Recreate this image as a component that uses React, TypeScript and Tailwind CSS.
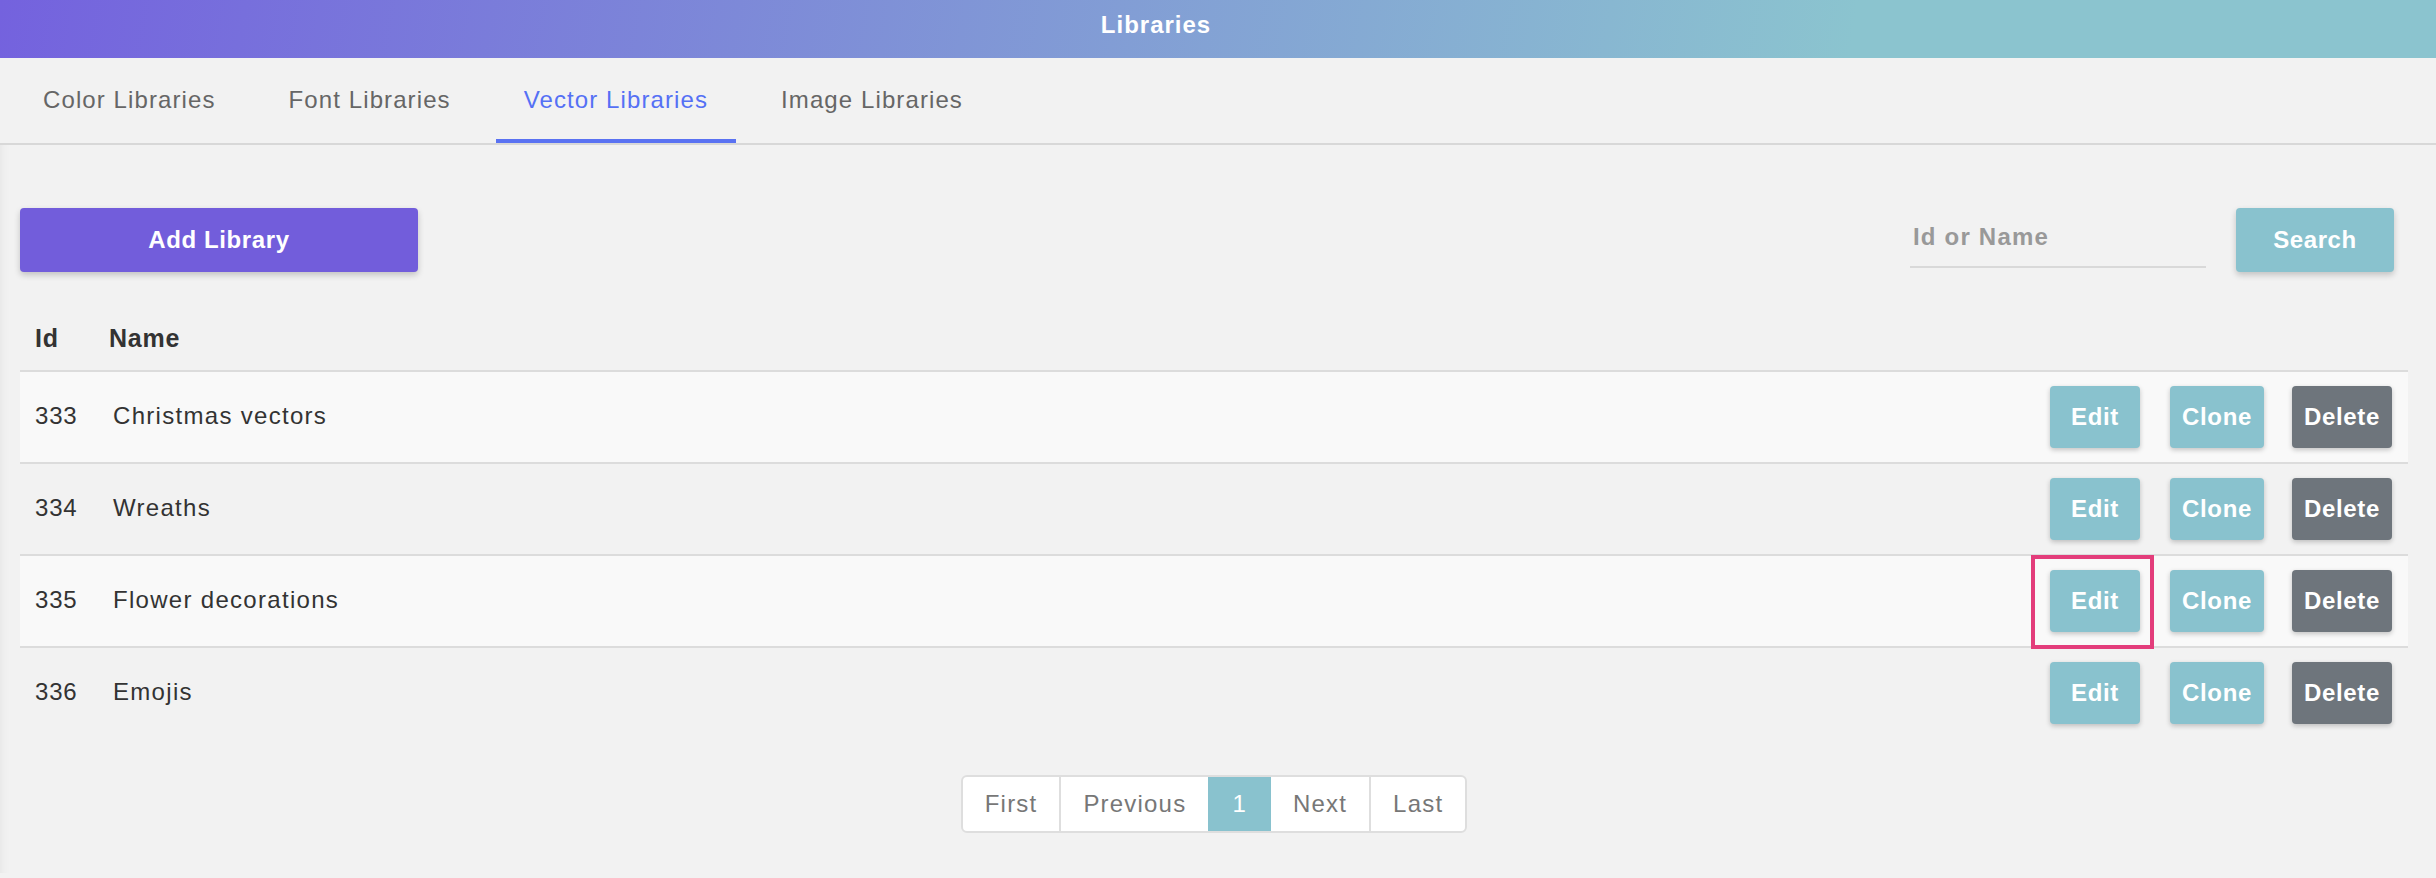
const tabs = ["Color Libraries", "Font Libraries", "Vector Libraries", "Image Libraries"];

const libraries = [
  { id: 333, name: "Christmas vectors" },
  { id: 334, name: "Wreaths" },
  { id: 335, name: "Flower decorations" },
  { id: 336, name: "Emojis" },
];

const pages = ["First", "Previous", "1", "Next", "Last"];

const btn =
  "flex h-[62px] items-center justify-center rounded-[4px] text-[24px] font-bold tracking-[0.7px] text-white shadow-[0_2px_5px_rgba(0,0,0,0.22)]";

export default function App() {
  return (
    <div className="min-h-screen bg-[#f2f2f2] font-['Liberation_Sans',Arial,sans-serif]">
      <header className="flex h-[58px] items-center justify-center bg-[linear-gradient(100deg,#7462de_0%,#8bc4cf_76%,#8bc4cf_100%)] pb-[8px] pr-[124px] text-[24px] font-bold tracking-[1px] text-white">
        Libraries
      </header>

      <nav className="flex h-[87px] gap-[17px] border-b-2 border-[#d8d8d8] pl-[15px]">
        {tabs.map((tab) => (
          <div
            key={tab}
            className={
              tab === "Vector Libraries"
                ? "flex items-center border-b-4 border-[#5a72f2] px-[28px] pt-[2px] text-[24px] tracking-[1.1px] text-[#5570f5]"
                : "flex items-center border-b-4 border-transparent px-[28px] pt-[2px] text-[24px] tracking-[1.1px] text-[#666666]"
            }
          >
            {tab}
          </div>
        ))}
      </nav>

      <main className="pl-[20px] pr-[28px] pt-[63px] shadow-[inset_12px_0_10px_-10px_rgba(0,0,0,0.05)]">
        <div className="flex items-start justify-between pr-[14px]">
          <button className="flex h-[64px] w-[398px] items-center justify-center rounded-[4px] bg-[#725ddb] text-[24px] font-bold tracking-[0.6px] text-white shadow-[0_3px_6px_rgba(0,0,0,0.2)]">
            Add Library
          </button>
          <div className="flex items-start">
            <input
              placeholder="Id or Name"
              className="mr-[30px] h-[60px] w-[296px] border-b-2 border-[#d9d9d9] bg-transparent pl-[3px] text-[24px] font-bold tracking-[1.2px] text-[#333] outline-none placeholder:text-[#999999]"
            />
            <button className="flex h-[64px] w-[158px] items-center justify-center rounded-[4px] bg-[#89c2ce] text-[24px] font-bold tracking-[0.6px] text-white shadow-[0_3px_6px_rgba(0,0,0,0.2)]">
              Search
            </button>
          </div>
        </div>

        <div className="mt-[36px] flex h-[62px] items-center text-[25px] font-bold tracking-[0.8px] text-[#333333]">
          <div className="w-[89px] pl-[15px]">Id</div>
          <div>Name</div>
        </div>

        {libraries.map((lib, i) => (
          <div
            key={lib.id}
            className={
              i % 2 === 0
                ? "flex h-[92px] items-center border-t-2 border-[#dcdcdc] bg-[#f9f9f9] pr-[16px] text-[24px] tracking-[1.3px] text-[#333333]"
                : "flex h-[92px] items-center border-t-2 border-[#dcdcdc] pr-[16px] text-[24px] tracking-[1.3px] text-[#333333]"
            }
          >
            <div className="w-[89px] pb-[3px] pl-[15px] tracking-[0.8px]">{lib.id}</div>
            <div className="flex-1 pb-[3px] pl-[4px]">{lib.name}</div>
            <div className="relative">
              <button className={`${btn} w-[90px] bg-[#89c2ce]`}>Edit</button>
              {lib.id === 335 ? (
                <span className="pointer-events-none absolute -bottom-[17px] -left-[19px] -right-[14px] -top-[15px] border-4 border-[#e33d7b]" />
              ) : null}
            </div>
            <button className={`${btn} ml-[30px] w-[94px] bg-[#89c2ce]`}>Clone</button>
            <button className={`${btn} ml-[28px] w-[100px] bg-[#6e757c]`}>Delete</button>
          </div>
        ))}

        <div className="mt-[37px] flex justify-center pb-[40px]">
          <div className="flex h-[58px] overflow-hidden rounded-[6px] border-2 border-[#dedede] bg-white">
            {pages.map((p, i) => (
              <div
                key={p}
                className={
                  p === "1"
                    ? "flex items-center bg-[#89c2ce] px-6 text-[24px] tracking-[1.2px] text-white"
                    : i > 0 && pages[i - 1] !== "1"
                      ? "flex items-center border-l-2 border-[#dedede] px-[22px] text-[24px] tracking-[1.2px] text-[#777777]"
                      : "flex items-center px-[22px] text-[24px] tracking-[1.2px] text-[#777777]"
                }
              >
                {p}
              </div>
            ))}
          </div>
        </div>
      </main>
    </div>
  );
}
